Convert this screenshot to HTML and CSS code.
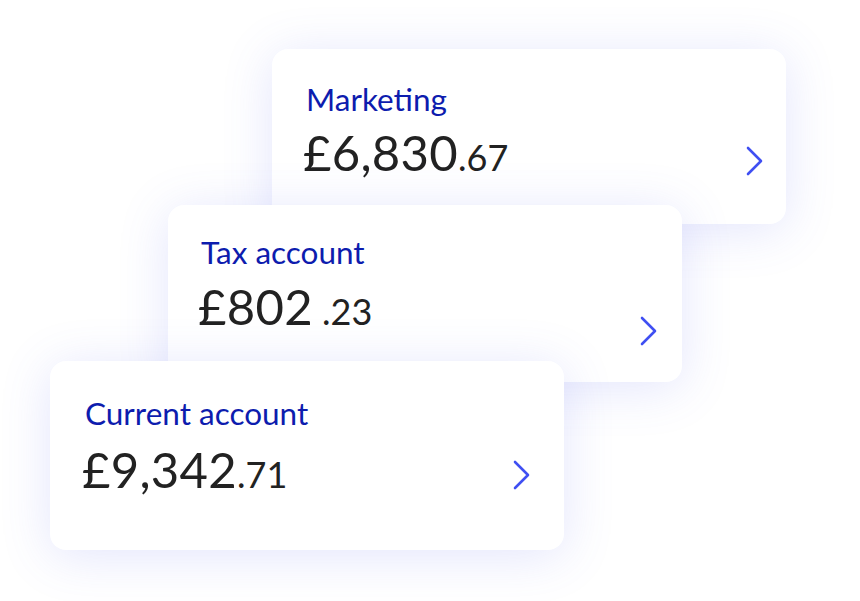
FILE: index.html
```html
<!DOCTYPE html>
<html lang="en">
<head>
<meta charset="utf-8">
<title>Accounts</title>
<link rel="stylesheet" href="styles.css">
</head>
<body>
<div class="stage">
  <div class="card card-marketing">
    <div class="info">
      <div class="label">Marketing</div>
      <div class="amount">£6,830<span class="cents">.67</span></div>
    </div>
    <svg class="chev" width="18" height="30" viewBox="0 0 18 30" aria-hidden="true"><polyline points="2,2 15,15 2,28"/></svg>
  </div>
  <div class="card card-tax">
    <div class="info">
      <div class="label">Tax account</div>
      <div class="amount">£802<span class="cents"> .23</span></div>
    </div>
    <svg class="chev" width="18" height="30" viewBox="0 0 18 30" aria-hidden="true"><polyline points="2,2 15,15 2,28"/></svg>
  </div>
  <div class="card card-current">
    <div class="info">
      <div class="label">Current account</div>
      <div class="amount">£9,342<span class="cents">.71</span></div>
    </div>
    <svg class="chev" width="18" height="30" viewBox="0 0 18 30" aria-hidden="true"><polyline points="2,2 15,15 2,28"/></svg>
  </div>
</div>
</body>
</html>
```
FILE: styles.css
```css
html, body {
  margin: 0;
  padding: 0;
  background: #ffffff;
}
body {
  font-family: Lato, "Open Sans", sans-serif;
}
.stage {
  position: relative;
  width: 860px;
  height: 601px;
  overflow: hidden;
}
.card {
  position: absolute;
  width: 514px;
  box-sizing: border-box;
  background: #ffffff;
  border-radius: 16px;
  box-shadow: 0 6px 50px rgba(88, 100, 240, 0.17);
  display: flex;
  align-items: flex-start;
  padding-left: 34px;
}
.info {
  display: flex;
  flex-direction: column;
  flex: 1;
}
.label {
  font-size: 31.5px;
  line-height: 36px;
  color: #0d1cae;
}
.amount {
  font-size: 49px;
  line-height: 56px;
  font-weight: 400;
  letter-spacing: 0.3px;
  color: #222222;
  margin-left: -3px;
}
.cents {
  font-size: 36px;
  letter-spacing: 0;
}
.chev {
  flex: none;
}
.chev polyline {
  fill: none;
  stroke: #3f4ff2;
  stroke-width: 2.6;
  stroke-linecap: round;
  stroke-linejoin: round;
}
.card-marketing {
  left: 272px;
  top: 49px;
  height: 175px;
  z-index: 1;
  padding-top: 32px;
}
.card-marketing .info { gap: 7px; }
.card-marketing .chev { margin-top: 65px; margin-right: 22px; }
.card-tax {
  left: 168px;
  top: 205px;
  height: 177px;
  z-index: 2;
  padding-top: 29px;
  padding-left: 33px;
}
.card-tax .info { gap: 8px; }
.card-tax .chev { margin-top: 82px; margin-right: 24px; }
.card-current {
  left: 50px;
  top: 361px;
  height: 189px;
  z-index: 3;
  padding-top: 34px;
  padding-left: 35px;
}
.card-current .info { gap: 10px; }
.card-current .chev { margin-top: 65px; margin-right: 33px; }
```
